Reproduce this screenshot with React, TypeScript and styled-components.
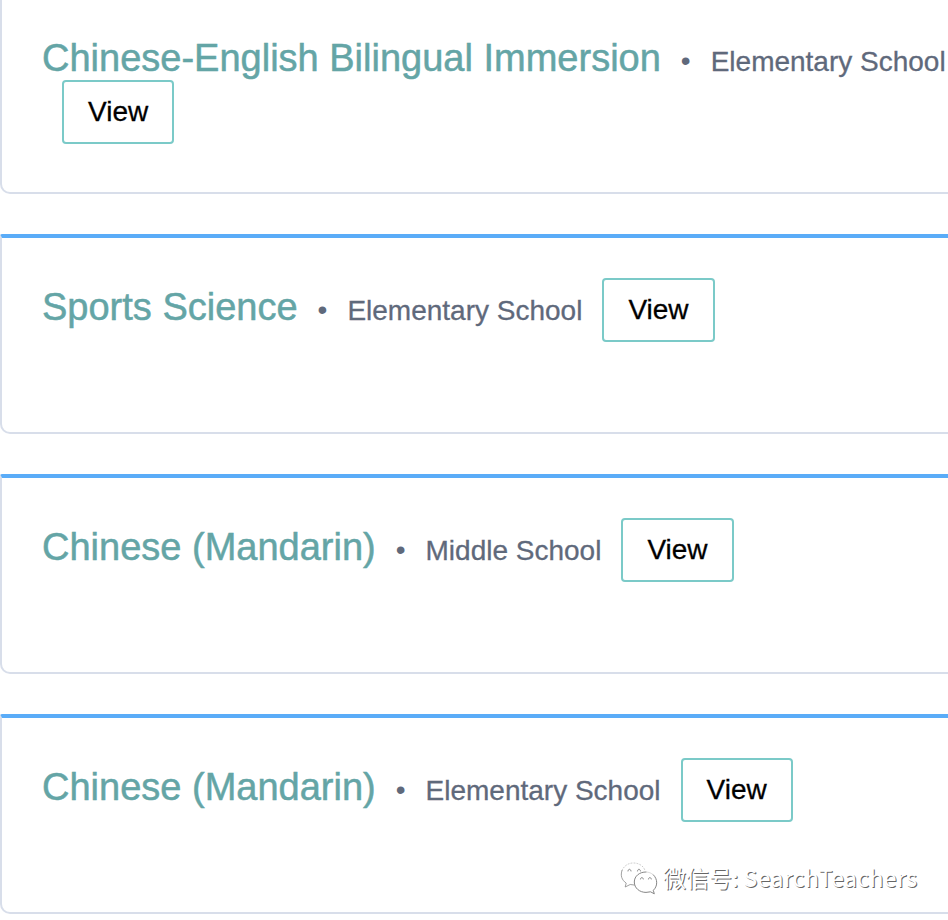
import React from "react";
import styled, { createGlobalStyle } from "styled-components";

const GlobalStyle = createGlobalStyle`
  * { box-sizing: border-box; }
  body {
    margin: 0;
    background: #fff;
    font-family: "Liberation Sans", Arial, sans-serif;
    overflow: hidden;
  }
`;

const Page = styled.main`
  position: relative;
  display: flex;
  flex-direction: column;
  gap: 40px;
  width: 948px;
  height: 920px;
  overflow: hidden;
`;

const Card = styled.article<{ $continued?: boolean }>`
  flex: none;
  width: 1100px;
  height: ${(p) => (p.$continued ? 194 : 200)}px;
  padding: ${(p) => (p.$continued ? 34 : 40)}px 40px 0;
  border: 2px solid #d8deea;
  border-top: ${(p) => (p.$continued ? "0" : "4px solid #5aacf8")};
  border-radius: ${(p) => (p.$continued ? "0 0 10px 10px" : "2px 2px 10px 10px")};
`;

const Row = styled.div`
  display: flex;
  align-items: flex-start;
  white-space: nowrap;
`;

const Title = styled.h2<{ $tight?: boolean }>`
  margin: ${(p) => (p.$tight ? 2 : 7)}px 0 0;
  font-size: 38px;
  line-height: 44px;
  font-weight: 400;
  color: #64a5a6;
  -webkit-text-stroke: 0.5px #64a5a6;
`;

const Meta = styled.span<{ $tight?: boolean }>`
  margin: ${(p) => (p.$tight ? 12 : 17)}px 0 0 20px;
  font-size: 28px;
  line-height: 32px;
  color: #5f697b;
  -webkit-text-stroke: 0.3px #5f697b;
`;

const Bullet = styled(Meta)`
  margin-top: ${(p) => (p.$tight ? 11 : 16)}px;
  -webkit-text-stroke: 0;
`;

const ViewButton = styled.button`
  flex: none;
  height: 64px;
  margin: 0 0 0 20px;
  padding: 0 24px;
  border: 2px solid #7bcac8;
  border-radius: 4px;
  background: #fff;
  font: 400 28px/60px "Liberation Sans", Arial, sans-serif;
  color: #000;
  -webkit-text-stroke: 0.3px #000;
`;

const Watermark = styled.div`
  position: absolute;
  left: 619px;
  top: 861px;
  display: flex;
  align-items: flex-start;
  height: 36px;
`;

const WatermarkText = styled.span`
  margin: -1px 0 0 4px;
  white-space: pre;
  font-family: "Noto Sans CJK SC", sans-serif;
  font-size: 23px;
  line-height: 34px;
  font-weight: 400;
  color: #fff;
  text-shadow: 1px 1px 0 #666;
`;

const WatermarkName = styled.span`
  letter-spacing: 0.4px;
`;

const WeChatIcon = () => (
  <svg width="40" height="36" viewBox="0 0 40 36" fill="none" strokeLinecap="round">
    <path d="M3 9.500C5.300 4.500 9.500 2 14.500 2c5.500 0 10 3 11.500 7.500" stroke="#bbb" strokeWidth=".8" strokeDasharray="1 2" />
    <path d="M3 9.500c-1.800 5-.3 9.500 4.200 12.600L6.200 26l5-2.500 4 .5" stroke="#888" strokeWidth=".8" />
    <path d="M27 11c-6.500-.2-11.700 4.200-11.700 10 0 6 5.200 10.400 11.700 10.400l4.500-.6 3.800 2-1-3.500c4.300-3.800 4.800-11 0-15.500" stroke="#777" strokeWidth=".9" />
    <path d="M27 11c2.800 0 5.300 1 7.300 2.800" stroke="#ccc" strokeWidth=".7" />
    <path d="M9 10c.2-2.400 2.700-2.400 3 0M18.500 10c.2-2.400 2.700-2.400 3 0M21.500 18c.2-2 2.500-2 2.800 0M29.500 18c.2-2 2.500-2 2.800 0" stroke="#777" strokeWidth=".9" />
  </svg>
);

const Program = ({ title, school }: { title: string; school: string }) => (
  <Card>
    <Row>
      <Title>{title}</Title>
      <Bullet>•</Bullet>
      <Meta>{school}</Meta>
      <ViewButton>View</ViewButton>
    </Row>
  </Card>
);

export default function App() {
  return (
    <>
      <GlobalStyle />
      <Page>
        <Card $continued>
          <Row>
            <Title $tight>Chinese-English Bilingual Immersion</Title>
            <Bullet $tight>•</Bullet>
            <Meta $tight>Elementary School</Meta>
          </Row>
          <Row>
            <ViewButton>View</ViewButton>
          </Row>
        </Card>
        <Program title="Sports Science" school="Elementary School" />
        <Program title="Chinese (Mandarin)" school="Middle School" />
        <Program title="Chinese (Mandarin)" school="Elementary School" />
        <Watermark>
          <WeChatIcon />
          <WatermarkText>
            微信号: <WatermarkName>SearchTeachers</WatermarkName>
          </WatermarkText>
        </Watermark>
      </Page>
    </>
  );
}
